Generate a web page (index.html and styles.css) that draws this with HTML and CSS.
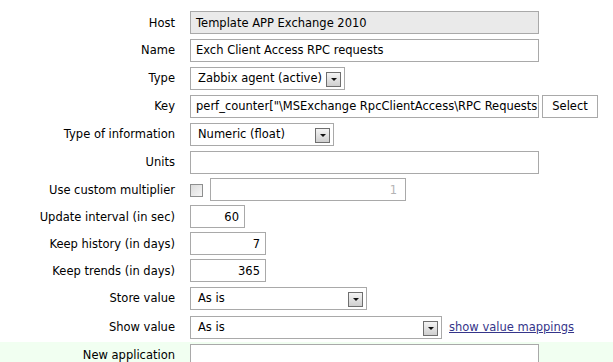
FILE: index.html
```html
<!DOCTYPE html>
<html lang="en">
<head>
    <meta charset="UTF-8">
    <title>Item</title>
    <link rel="stylesheet" href="styles.css">
</head>
<body>

    <div class="form">
        <div class="row h27">
            <div class="label">Host</div>
            <div class="field"><div class="input wide readonly">Template APP Exchange 2010</div></div>
        </div>
        <div class="row h28">
            <div class="label">Name</div>
            <div class="field"><div class="input wide">Exch Client Access RPC requests</div></div>
        </div>
        <div class="row h28">
            <div class="label">Type</div>
            <div class="field">
                <div class="select w-type">Zabbix agent (active)<span class="arrow"></span></div>
            </div>
        </div>
        <div class="row h28">
            <div class="label">Key</div>
            <div class="field">
                <div class="input wide clip">perf_counter["\MSExchange RpcClientAccess\RPC Requests"]</div>
                <div class="button">Select</div>
            </div>
        </div>
        <div class="row h28">
            <div class="label">Type of information</div>
            <div class="field">
                <div class="select w-info">Numeric (float)<span class="arrow"></span></div>
            </div>
        </div>
        <div class="row h28">
            <div class="label">Units</div>
            <div class="field"><div class="input wide"></div></div>
        </div>
        <div class="row h27">
            <div class="label">Use custom multiplier</div>
            <div class="field">
                <span class="checkbox"></span>
                <div class="input w-mult number disabled">1</div>
            </div>
        </div>
        <div class="row h27">
            <div class="label">Update interval (in sec)</div>
            <div class="field"><div class="input w-delay number">60</div></div>
        </div>
        <div class="row h27">
            <div class="label">Keep history (in days)</div>
            <div class="field"><div class="input w-days number">7</div></div>
        </div>
        <div class="row h27">
            <div class="label">Keep trends (in days)</div>
            <div class="field"><div class="input w-days number">365</div></div>
        </div>
        <div class="row h28">
            <div class="label">Store value</div>
            <div class="field">
                <div class="select w-store">As is<span class="arrow"></span></div>
            </div>
        </div>
        <div class="row h30">
            <div class="label">Show value</div>
            <div class="field">
                <div class="select w-show">As is<span class="arrow"></span></div>
                <a class="link" href="#">show value mappings</a>
            </div>
        </div>
        <div class="row h26 new">
            <div class="label">New application</div>
            <div class="field"><div class="input wide"></div></div>
        </div>
    </div>

</body>
</html>
```

FILE: styles.css
```css
body {
    margin: 0;
    background: white;
    color: black;
    font-family: "DejaVu Sans", Verdana, sans-serif;
    font-size: 11.5px;
}

.form {
    display: flex;
    flex-direction: column;
    padding-top: 9px;
}

.row {
    display: flex;
    align-items: center;
}

.h26 { height: 26px; }
.h27 { height: 27px; }
.h28 { height: 28px; }
.h30 { height: 30px; }

.row.new {
    background: #f1fff1;
}

.label {
    width: 175px;
    padding-right: 15px;
    text-align: right;
    white-space: nowrap;
}

.field {
    display: flex;
    align-items: center;
}

.input,
.select,
.button {
    box-sizing: border-box;
    height: 23px;
    border: 1px solid #a9a9a9;
    background: white;
    display: flex;
    align-items: center;
    padding: 0 5px;
    white-space: nowrap;
}

.wide { width: 349px; }
.w-mult { width: 196px; }
.w-delay { width: 55px; }
.w-days { width: 76px; }

.readonly {
    background: #eaeaea;
}

.clip {
    overflow: hidden;
}

.number {
    justify-content: flex-end;
}

.disabled {
    color: #b4b4b4;
    padding-right: 8px;
}

.select {
    padding: 0 3px 0 7px;
}

.w-type { width: 155px; }
.w-info { width: 144px; }
.w-store { width: 177px; }
.w-show { width: 252px; }

.arrow {
    box-sizing: border-box;
    width: 15px;
    height: 15px;
    margin-left: auto;
    margin-top: 2px;
    border: 1px solid #6f6f6f;
    background: linear-gradient(#f4f4f4, #cfcfcf);
    display: flex;
    align-items: center;
    justify-content: center;
}

.arrow::after {
    content: "";
    border-left: 3px solid transparent;
    border-right: 3px solid transparent;
    border-top: 3px solid #111;
    margin-top: 1px;
}

.button {
    width: 56px;
    margin-left: 3px;
    justify-content: center;
}

.checkbox {
    box-sizing: border-box;
    width: 13px;
    height: 13px;
    border: 1px solid #8e8f8f;
    background: linear-gradient(135deg, #dcdcdc, #f6f6f6);
    margin-right: 7px;
    margin-top: 2px;
}

.link {
    margin-left: 7px;
    color: #35358a;
}
```
